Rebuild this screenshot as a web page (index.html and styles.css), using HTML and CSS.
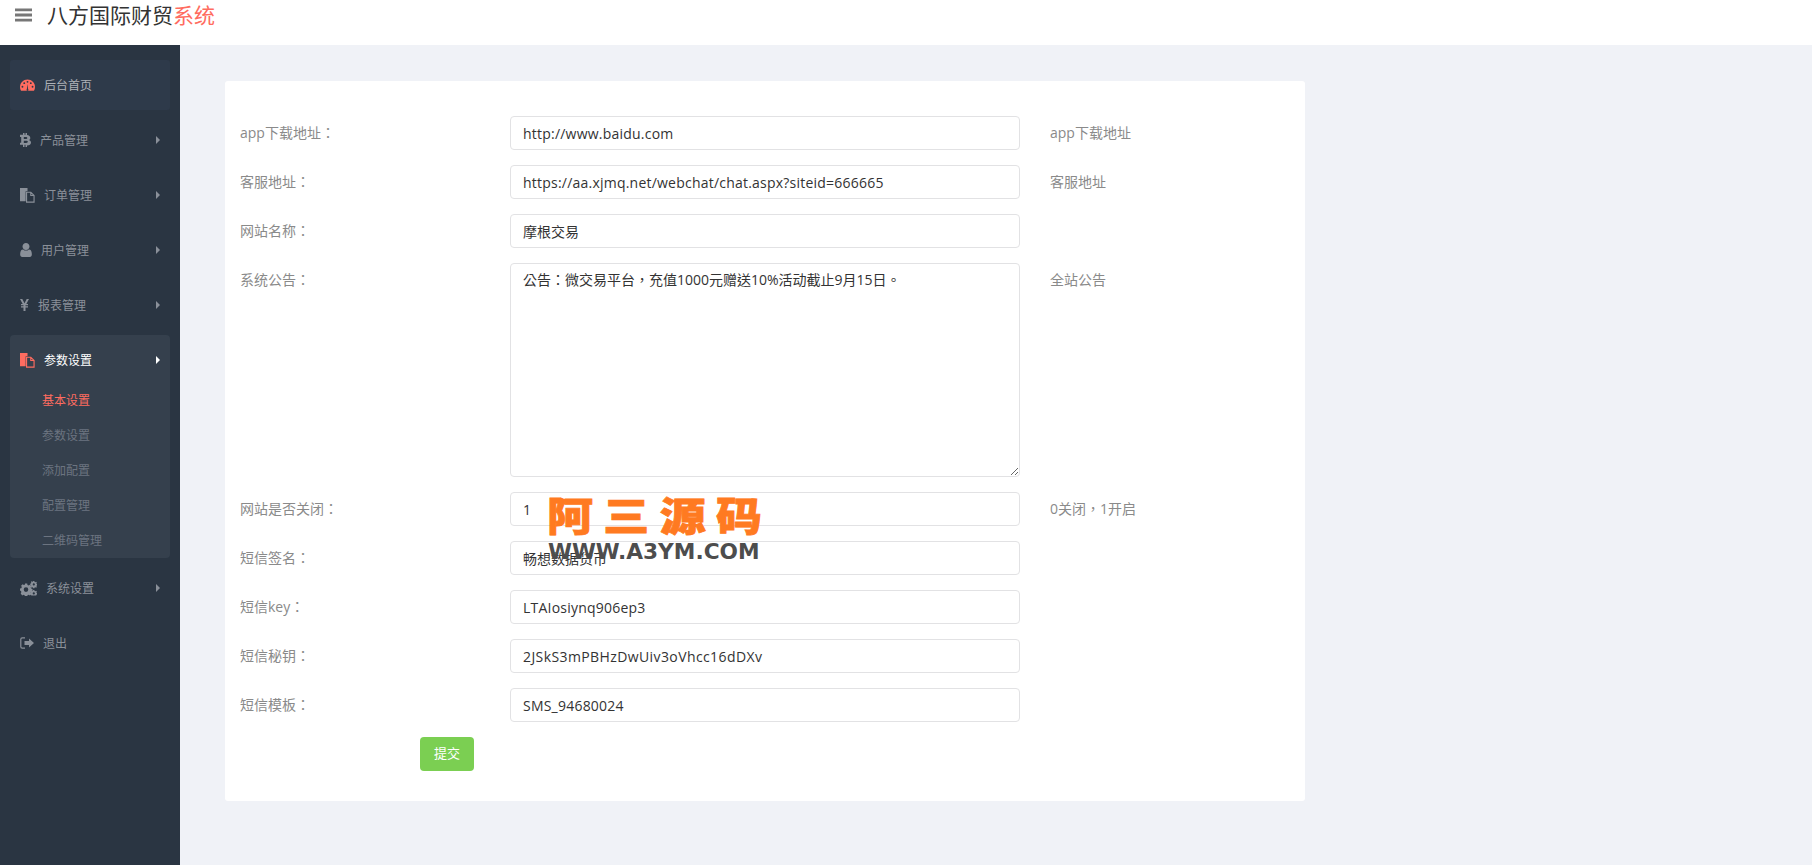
FILE: index.html
```html
<!DOCTYPE html>
<html lang="zh-CN">
<head>
<meta charset="utf-8">
<title>八方国际财贸系统</title>
<link rel="stylesheet" href="styles.css">
</head>
<body>
<header class="topbar">
  <svg class="bars" viewBox="0 0 18 14"><path d="M0 0h18v3H0zM0 5.500h18v3H0zM0 11h18v3H0z"/></svg>
  <h1 class="brand">八方国际财贸<span class="brand-accent">系统</span></h1>
</header>
<div class="layout">
  <aside class="sidebar">
    <nav class="nav">
      <a class="nav-item nav-home">
        <svg class="ico ico-gauge" viewBox="0 0 16 12"><path class="fill-red" d="M8 0C3.600 0 0 3.500 0 8c0 1.500.4 2.900 1.100 4h13.800c.7-1.100 1.100-2.500 1.100-4 0-4.500-3.600-8-8-8z"/><g class="gauge-dots"><circle cx="2.600" cy="7.800" r="1"/><circle cx="4.500" cy="4" r="1"/><circle cx="8" cy="2.600" r="1"/><circle cx="11.500" cy="4" r="1"/><circle cx="13.400" cy="7.800" r="1"/><path d="M7.300 10.500 8 4.800l.7 5.700a1 1 0 1 1-1.400 0z"/></g></svg>
        <span>后台首页</span>
      </a>
      <a class="nav-item">
        <svg class="ico ico-btc" viewBox="0 0 11 14"><path fill-rule="evenodd" d="M3 0h1.500v1.800h1V0H7v1.900c2 .3 3.300 1.300 3.300 3 0 1-.5 1.700-1.300 2.100 1.200.4 2 1.300 2 2.600 0 1.900-1.500 2.900-4 3V14H5.500v-2.300h-1V14H3v-2.300H0v-2h1.200V4H0V1.800h3zm.8 4v2.100h2c.9 0 1.500-.4 1.500-1.100S6.700 4 5.800 4zm0 3.800v2.100h2.400c1 0 1.600-.4 1.600-1.100 0-.6-.6-1-1.600-1z"/></svg>
        <span>产品管理</span>
        <i class="caret"></i>
      </a>
      <a class="nav-item">
        <svg class="ico ico-files" viewBox="0 0 16 16"><path d="M0 0h8v3.500H6V14H0z"/><path class="outline" d="M7 4.500h4.500l3.500 3.500v7H7zM11.500 4.500V8H15"/></svg>
        <span>订单管理</span>
        <i class="caret"></i>
      </a>
      <a class="nav-item">
        <svg class="ico ico-user" viewBox="256 128 1280 1536"><path d="M1536 1399q0 109-62.500 187t-150.500 78h-854q-88 0-150.500-78t-62.500-187q0-85 8.500-160.500t31.500-151.500 58.500-130 94-88.500 134.500-34.500q131 128 313 128t313-128q76 0 134.500 34.500t94 88.500 58.500 130 31.500 151.500 8.500 160.500zm-256-887q0 159-112.500 271.500t-271.500 112.500-271.500-112.500-112.500-271.500 112.500-271.500 271.500-112.500 271.500 112.500 112.500 271.500z"/></svg>
        <span>用户管理</span>
        <i class="caret"></i>
      </a>
      <a class="nav-item">
        <svg class="ico ico-yen" viewBox="0 0 9 12"><path d="M0 0h2.300l2.200 4.200L6.700 0H9L6.300 5H8v1.300H5.500v1H8v1.300H5.500V12H3.500V8.600H1V7.300h2.500v-1H1V5h1.700z"/></svg>
        <span>报表管理</span>
        <i class="caret"></i>
      </a>
      <div class="nav-group">
        <a class="nav-item nav-open">
          <svg class="ico ico-files" viewBox="0 0 16 16"><path class="fill-red" d="M0 0h8v3.500H6V14H0z"/><path class="outline outline-red" d="M7 4.500h4.500l3.500 3.500v7H7zM11.500 4.500V8H15"/></svg>
          <span>参数设置</span>
          <i class="caret"></i>
        </a>
        <ul class="subnav">
          <li class="subnav-item subnav-active">基本设置</li>
          <li class="subnav-item">参数设置</li>
          <li class="subnav-item">添加配置</li>
          <li class="subnav-item">配置管理</li>
          <li class="subnav-item">二维码管理</li>
        </ul>
      </div>
      <a class="nav-item">
        <svg class="ico ico-cogs" viewBox="0 0 17 15"><path fill-rule="evenodd" d="M5 2.500h2.200l.3 1.400 1.100.5 1.300-.7 1.500 1.500-.7 1.200.5 1.200 1.300.4v2.100l-1.300.4-.5 1.100.7 1.300-1.500 1.500-1.300-.7-1.100.5-.3 1.300H5l-.4-1.300-1.100-.5-1.300.7L.7 12.400l.7-1.300-.5-1.100L0 9.600V7.500l1.300-.3.500-1.200-.7-1.300 1.500-1.500 1.300.7 1.100-.5zM6 6.300a2.300 2.300 0 1 0 0 4.600 2.300 2.300 0 0 0 0-4.600z"/><path fill-rule="evenodd" d="M13.200 0h1.200l.2.900.7.300.8-.5.800.8-.5.800.3.600.3.100v1.400l-.3.100-.3.600.5.800-.8.800-.8-.5-.7.300-.2.800h-1.200l-.2-.8-.6-.3-.8.500-.8-.8.500-.8-.3-.6-.8-.2V2.600l.8-.2.300-.6-.5-.8.800-.8.800.5.600-.3zm.6 2.300a1.100 1.100 0 1 0 0 2.200 1.100 1.100 0 0 0 0-2.200z"/><path fill-rule="evenodd" d="M13.200 9h1.200l.2.900.7.300.8-.5.800.8-.5.800.3.600.3.100v1.400l-.3.100-.3.600-.2.500h-5l-.1-.5-.3-.6-.8-.2v-1.400l.8-.2.300-.6-.5-.8.800-.8.800.5.600-.3zm.6 2.300a1.100 1.100 0 1 0 0 2.200 1.100 1.100 0 0 0 0-2.200z"/></svg>
        <span>系统设置</span>
        <i class="caret"></i>
      </a>
      <a class="nav-item">
        <svg class="ico ico-exit" viewBox="0 0 14 12"><path d="M9 1.500 14 6l-5 4.500V8H4.500V4H9z"/><path class="outline" d="M5 .8H2.200C1.300.8.800 1.400.8 2.200v7.600c0 .8.500 1.400 1.400 1.400H5"/></svg>
        <span>退出</span>
      </a>
    </nav>
  </aside>
  <main class="content">
    <form class="card">
      <div class="row"><label class="row-label">app下载地址<span class="punct" lang="zh-TW">：</span></label><input class="field field-latin" value="http://www.baidu.com"><span class="row-help">app下载地址</span></div>
      <div class="row"><label class="row-label">客服地址<span class="punct" lang="zh-TW">：</span></label><input class="field field-latin" value="https://aa.xjmq.net/webchat/chat.aspx?siteid=666665"><span class="row-help">客服地址</span></div>
      <div class="row"><label class="row-label">网站名称<span class="punct" lang="zh-TW">：</span></label><input class="field" value="摩根交易"></div>
      <div class="row"><label class="row-label">系统公告<span class="punct" lang="zh-TW">：</span></label><textarea class="field field-area" lang="zh-TW">公告：微交易平台，充值1000元赠送10%活动截止9月15日。</textarea><span class="row-help">全站公告</span></div>
      <div class="row"><label class="row-label">网站是否关闭<span class="punct" lang="zh-TW">：</span></label><input class="field" value="1"><span class="row-help">0关闭<span class="punct" lang="zh-TW">，</span>1开启</span></div>
      <div class="row"><label class="row-label">短信签名<span class="punct" lang="zh-TW">：</span></label><input class="field" value="畅想数据货币"></div>
      <div class="row"><label class="row-label">短信key<span class="punct" lang="zh-TW">：</span></label><input class="field field-latin" value="LTAIosiynq906ep3"></div>
      <div class="row"><label class="row-label">短信秘钥<span class="punct" lang="zh-TW">：</span></label><input class="field field-key" value="2JSkS3mPBHzDwUiv3oVhcc16dDXv"></div>
      <div class="row"><label class="row-label">短信模板<span class="punct" lang="zh-TW">：</span></label><input class="field field-latin" value="SMS_94680024"></div>
      <button class="submit" type="button">提交</button>
    </form>
  </main>
</div>
<div class="watermark">
  <div class="wm-cn">阿三源码</div>
  <div class="wm-en">WWW.A3YM.COM</div>
</div>
</body>
</html>
```
FILE: styles.css
```css
* { box-sizing: border-box; }
html, body { margin: 0; height: 100%; overflow: hidden; }
body {
  font-family: "Open Sans", "Noto Sans CJK SC", sans-serif;
  font-size: 14px;
  color: #333;
  background: #f0f2f7;
  display: flex;
  flex-direction: column;
}
.topbar {
  flex: 0 0 45px;
  background: #fff;
  display: flex;
  align-items: flex-start;
  padding-left: 15px;
}
.bars { width: 17px; height: 14px; margin-top: 8px; fill: #777; }
.brand {
  margin: 0 0 0 15px;
  font-size: 21px;
  line-height: 30px;
  font-weight: 400;
  color: #333;
}
.brand-accent { color: #ff6c60; }
.layout { flex: 1; display: flex; min-height: 0; }
.sidebar { flex: 0 0 180px; background: #2a3542; padding: 15px 10px 0; }
.nav { display: flex; flex-direction: column; gap: 5px; }
.nav-item {
  height: 50px;
  display: flex;
  align-items: center;
  padding: 0 10px;
  font-size: 12px;
  color: #8a9099;
  border-radius: 3px;
  position: relative;
}
.nav-home { background: #2e3a4a; color: #aeb2b7; }
.nav-open { color: #fff; }
.nav-group { background: #35404d; border-radius: 4px; height: 223px; }
.ico { fill: currentColor; flex: none; margin-right: 9px; display: block; }
.ico-gauge { width: 15px; height: 12px; }
.ico-btc { width: 11px; height: 14px; }
.ico-files { width: 15px; height: 15px; }
.ico-user { width: 12px; height: 14px; }
.ico-yen { width: 9px; height: 12px; }
.ico-cogs { width: 17px; height: 15px; }
.ico-exit { width: 14px; height: 12px; }
.gauge-dots { fill: #2e3a4a; }
.fill-red { fill: #ff6c60; }
.outline { fill: none; stroke: currentColor; stroke-width: 1.200; }
.outline-red { stroke: #ff6c60; }
.caret {
  position: absolute;
  right: 10px;
  top: 50%;
  margin-top: -4px;
  width: 0;
  height: 0;
  border-left: 4px solid currentColor;
  border-top: 4px solid transparent;
  border-bottom: 4px solid transparent;
}
.subnav { list-style: none; margin: -2px 0 0; padding: 0; }
.subnav-item {
  height: 35px;
  line-height: 35px;
  padding-left: 32px;
  font-size: 12px;
  color: #6c7480;
}
.subnav-active { color: #ff6c60; }
.content { flex: 1; min-width: 0; padding: 36px 0 0 45px; }
.card {
  width: 1080px;
  background: #fff;
  border-radius: 3px;
  padding: 35px 15px 30px;
}
.row { display: flex; align-items: flex-start; height: 34px; margin-bottom: 15px; }
.row:has(.field-area) { height: 214px; }
.row-label {
  flex: 0 0 270px;
  line-height: 34px;
  color: #8a8a8a;
}
.row-help { margin-left: 30px; line-height: 34px; color: #8a8a8a; }
.punct { font-family: "Noto Sans CJK TC", sans-serif; line-height: 0; }
.field {
  flex: 0 0 510px;
  width: 510px;
  height: 34px;
  padding: 6px 12px;
  border: 1px solid #e2e2e4;
  border-radius: 4px;
  background: #fff;
  color: #333;
  font: inherit;
  line-height: 20px;
  outline: none;
}
.field-latin { letter-spacing: 0.22px; }
.field-key { letter-spacing: 0.4px; }
.field-area { height: 214px; font-family: "Open Sans", "Noto Sans CJK TC", sans-serif; }
.submit {
  display: block;
  margin-left: 180px;
  width: 54px;
  height: 34px;
  padding: 0 0 3px;
  border: 0;
  border-radius: 4px;
  background: #7bcf52;
  color: #fff;
  font: inherit;
  font-size: 13px;
}
.watermark {
  position: absolute;
  left: 547px;
  top: 487px;
  width: 220px;
  pointer-events: none;
}
.wm-cn {
  font-family: "Noto Sans CJK SC", sans-serif;
  font-weight: 900;
  font-size: 40px;
  line-height: 54px;
  letter-spacing: 9px;
  color: #ff7a21;
  white-space: nowrap;
  transform: scaleX(1.15);
  transform-origin: left center;
  -webkit-text-stroke: 0.8px #ff7a21;
}
.wm-en {
  font-family: "DejaVu Sans", sans-serif;
  font-weight: 700;
  font-size: 21.7px;
  line-height: 22px;
  margin-left: 1px;
  color: #4d4d4d;
  white-space: nowrap;
}
```
